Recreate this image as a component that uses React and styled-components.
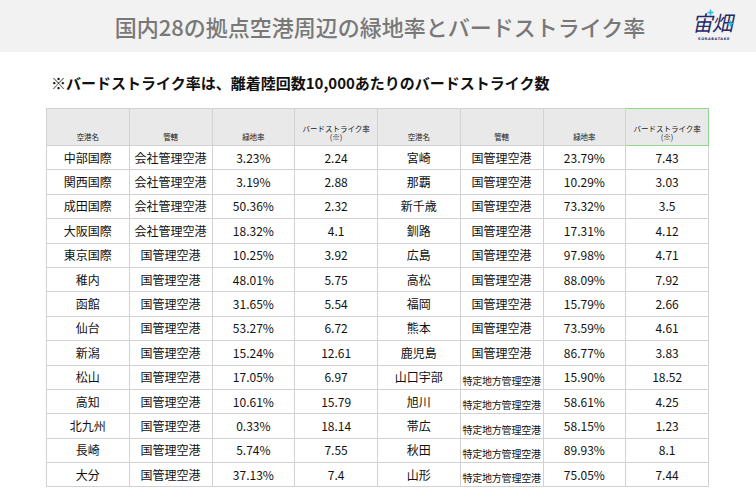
import React from "react";
import styled, { createGlobalStyle } from "styled-components";

const Global = createGlobalStyle`
  html, body { margin: 0; padding: 0; background: #ffffff; }
  body { font-family: "Noto Sans CJK JP", "Noto Sans", sans-serif; color: #111; }
`;

const Page = styled.div`
  width: 756px;
  height: 503px;
  overflow: hidden;
  background: #fff;
`;

const TitleBar = styled.header`
  height: 52px;
  background: #f2f2f2;
  display: grid;
  grid-template-columns: 1fr auto 1fr;
  align-items: center;
`;

const Title = styled.h1`
  grid-column: 2;
  margin: 0 0 0 4px;
  font-family: "Noto Sans CJK JP", sans-serif;
  font-size: 22px;
  font-weight: 500;
  color: #787878;
  letter-spacing: 0;
  line-height: 1;
`;

const LogoWrap = styled.div`
  grid-column: 3;
  justify-self: end;
  margin-right: 18px;
  margin-top: 2px;
  position: relative;
  width: 48px;
  height: 34px;
  display: flex;
  flex-direction: column;
  align-items: center;
`;

const LogoText = styled.span`
  font-family: "Noto Sans CJK JP", sans-serif;
  font-size: 21px;
  line-height: 24px;
  font-weight: 400;
  color: #26296a;
  transform: skewX(-12deg);
  letter-spacing: -1px;
`;

const LogoSub = styled.span`
  font-family: "DejaVu Sans", sans-serif;
  font-size: 3.5px;
  font-weight: 700;
  letter-spacing: 0.6px;
  color: #26296a;
  line-height: 5px;
  margin-top: 3px;
`;

const Cross = styled.svg`
  position: absolute;
  left: ${(p) => p.$x}px;
  top: ${(p) => p.$y}px;
`;

const Note = styled.p`
  margin: 21px 0 0 0;
  padding-left: 51px;
  font-size: 15px;
  line-height: 20px;
  font-weight: 700;
  color: #111;
`;

const Table = styled.table`
  margin: 15px 0 0 46px;
  width: 663px;
  table-layout: fixed;
  border-collapse: collapse;
  font-family: "Noto Sans CJK JP", sans-serif;
`;

const Head = styled.th`
  height: 37px;
  padding: 0 1px 4px;
  box-sizing: border-box;
  background: #e9e9e9;
  border: 1px solid ${(p) => (p.$selected ? "#8fd68f" : "#d2d2d2")};
  font-size: 7.5px;
  line-height: 8px;
  font-weight: 400;
  color: #222;
  vertical-align: bottom;
  text-align: center;
  white-space: pre-line;
`;

const Row = styled.tr`
  height: 24.4px;
`;

const Cell = styled.td`
  padding: 0;
  border: 1px solid #d2d2d2;
  text-align: center;
  vertical-align: ${(p) => (p.$small ? "bottom" : "middle")};
  font-size: ${(p) => (p.$small ? "10px" : "12px")};
  line-height: ${(p) => (p.$small ? "17px" : "14px")};
  color: #111;
  white-space: nowrap;
  overflow: hidden;
  letter-spacing: ${(p) => (p.$small ? "-0.2px" : "0")};
`;

const rows = [
  ["中部国際", "会社管理空港", "3.23%", "2.24", "宮崎", "国管理空港", "23.79%", "7.43"],
  ["関西国際", "会社管理空港", "3.19%", "2.88", "那覇", "国管理空港", "10.29%", "3.03"],
  ["成田国際", "会社管理空港", "50.36%", "2.32", "新千歳", "国管理空港", "73.32%", "3.5"],
  ["大阪国際", "会社管理空港", "18.32%", "4.1", "釧路", "国管理空港", "17.31%", "4.12"],
  ["東京国際", "国管理空港", "10.25%", "3.92", "広島", "国管理空港", "97.98%", "4.71"],
  ["稚内", "国管理空港", "48.01%", "5.75", "高松", "国管理空港", "88.09%", "7.92"],
  ["函館", "国管理空港", "31.65%", "5.54", "福岡", "国管理空港", "15.79%", "2.66"],
  ["仙台", "国管理空港", "53.27%", "6.72", "熊本", "国管理空港", "73.59%", "4.61"],
  ["新潟", "国管理空港", "15.24%", "12.61", "鹿児島", "国管理空港", "86.77%", "3.83"],
  ["松山", "国管理空港", "17.05%", "6.97", "山口宇部", "特定地方管理空港", "15.90%", "18.52"],
  ["高知", "国管理空港", "10.61%", "15.79", "旭川", "特定地方管理空港", "58.61%", "4.25"],
  ["北九州", "国管理空港", "0.33%", "18.14", "帯広", "特定地方管理空港", "58.15%", "1.23"],
  ["長崎", "国管理空港", "5.74%", "7.55", "秋田", "特定地方管理空港", "89.93%", "8.1"],
  ["大分", "国管理空港", "37.13%", "7.4", "山形", "特定地方管理空港", "75.05%", "7.44"],
];

const heads = ["空港名", "管轄", "緑地率", "バードストライク率\n(※)", "空港名", "管轄", "緑地率", "バードストライク率\n(※)"];

function PlusMark({ x, y }) {
  return (
    <Cross $x={x} $y={y} width="7" height="7" viewBox="0 0 7 7">
      <path d="M3.5 0.5 V6.5 M0.5 3.5 H6.5" stroke="#2fb8dc" strokeWidth="1.6" />
    </Cross>
  );
}

export default function App() {
  return (
    <Page>
      <Global />
      <TitleBar>
        <Title>国内28の拠点空港周辺の緑地率とバードストライク率</Title>
        <LogoWrap>
          <LogoText>宙畑</LogoText>
          <LogoSub>SORABATAKE</LogoSub>
          <PlusMark x={17} y={-1} />
          <PlusMark x={37} y={10} />
        </LogoWrap>
      </TitleBar>
      <Note>※バードストライク率は、離着陸回数10,000あたりのバードストライク数</Note>
      <Table>
        <colgroup>
          {heads.map((_, i) => (
            <col key={i} style={{ width: "12.5%" }} />
          ))}
        </colgroup>
        <thead>
          <tr>
            {heads.map((h, i) => (
              <Head key={i} $selected={i === 7}>
                {h}
              </Head>
            ))}
          </tr>
        </thead>
        <tbody>
          {rows.map((r, ri) => (
            <Row key={ri}>
              {r.map((c, ci) => (
                <Cell key={ci} $small={c.length > 6}>
                  {c}
                </Cell>
              ))}
            </Row>
          ))}
        </tbody>
      </Table>
    </Page>
  );
}
